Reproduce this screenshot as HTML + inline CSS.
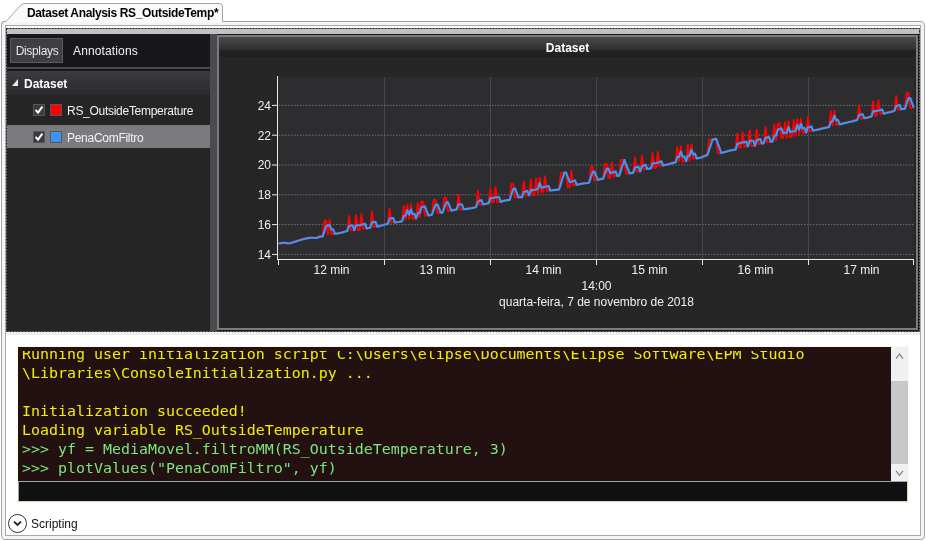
<!DOCTYPE html>
<html><head><meta charset="utf-8"><title>Dataset Analysis</title>
<style>
html,body{margin:0;padding:0;background:#fff;}
body{width:926px;height:541px;position:relative;overflow:hidden;font-family:"Liberation Sans",sans-serif;font-size:12px;color:#000;}
.abs{position:absolute;}
#outer{left:1px;top:21px;width:922px;height:517px;border:1px solid #a5a5a5;border-radius:4px;background:#f4f4f4;}
#inner{left:5px;top:25px;width:914px;height:509px;border:1px solid #a8a8a8;background:#fff;}
#tabsvg{left:0;top:0;}
#tabtxt{left:27px;top:6px;font-weight:bold;font-size:12px;letter-spacing:-0.36px;white-space:nowrap;}
#band{left:6px;top:29px;width:914px;height:5px;background:#c2c2c2;}
#dark{left:7px;top:34px;width:912px;height:297px;background:#18181c;}
#focus{left:0;top:0;}
#below{left:6px;top:332px;width:914px;height:3px;background:#efefef;}
#lp{left:7px;top:34px;width:203px;height:297px;background:#252526;}
#tabs{left:0;top:0;width:203px;height:37px;background:#18181c;}
#tabline{left:0;top:33px;width:203px;height:2px;background:#4b4b50;}
#btn{left:3px;top:4px;width:51px;height:23px;border:1px solid #5a5a5f;background:#3e3e43;color:#e6e6e6;line-height:24px;text-align:center;letter-spacing:-0.33px;text-indent:1px;}
#ann{left:66px;top:5px;color:#f0f0f0;line-height:24px;letter-spacing:0.13px;}
#dshead{left:0;top:37px;width:203px;height:24px;background:linear-gradient(#3b3b40,#2a2a2d);}
#dshead span{position:absolute;left:17px;top:6px;color:#fff;font-weight:bold;}
.row{left:0;width:203px;height:23px;color:#f2f2f2;}
.row .cb{position:absolute;left:26px;top:6px;width:10px;height:10px;border:1px solid #54545a;background:#3a3a40;}
.row .sw{position:absolute;left:43px;top:6px;width:10px;height:10px;border:1px solid #56565b;}
.row .t{position:absolute;left:60px;top:6px;white-space:nowrap;letter-spacing:-0.28px;}
#split{left:210px;top:34px;width:7px;height:297px;background:#4b4b4f;}
#chart{left:217px;top:35px;width:697px;height:291px;border:2px solid #7b7b80;background:#262626;}
#chead{left:0;top:0;width:697px;height:20px;background:linear-gradient(#4b4b4b 0%,#2f2f2f 63%,#242424 67%,#202020 100%);color:#fff;font-weight:bold;text-align:center;line-height:22px;}
#console{left:18px;top:347px;width:873px;height:134px;background:#231111;overflow:hidden;font-family:"DejaVu Sans Mono","Liberation Mono",monospace;font-size:14.95px;line-height:19px;white-space:pre;}
#console div{position:absolute;left:4px;}
.y{color:#f0f000;}
.g{color:#7fe47f;}
#sb{left:891px;top:347px;width:17px;height:134px;background:#f0f0f0;}
#thumb{left:0;top:34px;width:17px;height:83px;background:#c8c8c8;}
#inp{left:18px;top:481px;width:888px;height:19px;background:#111;border:1px solid #a4a4ac;border-bottom-color:#d8d8d0;border-right-color:#d8d8d0;}
#scr{left:31px;top:517px;font-size:12px;color:#111;}
#wrap{position:absolute;left:0;top:0;width:926px;height:541px;will-change:transform;}
</style></head><body><div id="wrap">
<div class="abs" id="outer"></div>
<div class="abs" id="inner"></div>
<svg class="abs" id="tabsvg" width="240" height="30" viewBox="0 0 240 30">
<path d="M2 26 L2 24 Q2 22 4 22 L6 21.5 L21 5 Q23 3.5 25 3.5 L219 3.5 Q222.5 3.5 222.5 7 L222.5 22.2 L2 22.2 Z" fill="#fafafa" stroke="none"/>
<path d="M1.5 26 L1.5 24 Q1.5 21.5 4 21.5 L6 21.5 L21 5 Q23 3.5 25 3.5 L219 3.5 Q222.5 3.5 222.5 7 L222.5 21.5" fill="none" stroke="#a5a5a5" stroke-width="1"/>
</svg>
<div class="abs" id="tabtxt">Dataset Analysis RS_OutsideTemp*</div>
<div class="abs" id="band"></div>
<div class="abs" id="dark"></div>
<div class="abs" id="below"></div>
<div class="abs" id="lp">
  <div class="abs" id="tabs"></div>
  <div class="abs" id="btn">Displays</div>
  <div class="abs" id="ann">Annotations</div>
  <div class="abs" id="tabline"></div>
  <div class="abs" id="dshead"><svg class="abs" style="left:5px;top:8px" width="8" height="8"><path d="M0 7 L6 7 L6 0 Z" fill="#eee"/></svg><span>Dataset</span></div>
  <div class="abs row" style="top:64px"><div class="cb"><svg width="10" height="10" style="position:absolute;left:0;top:0"><path d="M1.6 4.8 L4 7.6 L8.4 1.6" fill="none" stroke="#fff" stroke-width="2"/></svg></div><div class="sw" style="background:#f00"></div><div class="t">RS_OutsideTemperature</div></div>
  <div class="abs row" style="top:91px;background:#7b7b7f"><div class="cb"><svg width="10" height="10" style="position:absolute;left:0;top:0"><path d="M1.6 4.8 L4 7.6 L8.4 1.6" fill="none" stroke="#fff" stroke-width="2"/></svg></div><div class="sw" style="background:#3d93f5"></div><div class="t">PenaComFiltro</div></div>
</div>
<div class="abs" id="split"></div>
<div class="abs" id="chart">
  <div class="abs" id="chead">Dataset</div>
  <svg class="abs" id="plot" style="left:-219px;top:-37px" width="926" height="340" viewBox="0 0 926 340">
  <!--PLOT-->
<rect x="278" y="77" width="636" height="182" fill="#2d2d30"/>
<line x1="384.5" y1="77" x2="384.5" y2="259" stroke="#47474a" stroke-width="1"/>
<line x1="490.5" y1="77" x2="490.5" y2="259" stroke="#47474a" stroke-width="1"/>
<line x1="596.5" y1="77" x2="596.5" y2="259" stroke="#47474a" stroke-width="1"/>
<line x1="702.5" y1="77" x2="702.5" y2="259" stroke="#47474a" stroke-width="1"/>
<line x1="808.5" y1="77" x2="808.5" y2="259" stroke="#47474a" stroke-width="1"/>
<line x1="279" y1="105.4" x2="914" y2="105.4" stroke="#727274" stroke-width="1" stroke-dasharray="1.5 1.5"/>
<line x1="279" y1="135.2" x2="914" y2="135.2" stroke="#727274" stroke-width="1" stroke-dasharray="1.5 1.5"/>
<line x1="279" y1="165.0" x2="914" y2="165.0" stroke="#727274" stroke-width="1" stroke-dasharray="1.5 1.5"/>
<line x1="279" y1="194.8" x2="914" y2="194.8" stroke="#727274" stroke-width="1" stroke-dasharray="1.5 1.5"/>
<line x1="279" y1="224.6" x2="914" y2="224.6" stroke="#727274" stroke-width="1" stroke-dasharray="1.5 1.5"/>
<line x1="279" y1="254.4" x2="914" y2="254.4" stroke="#727274" stroke-width="1" stroke-dasharray="1.5 1.5"/>
<polyline fill="none" stroke="#ff0000" stroke-width="1.9" stroke-linejoin="round" points="278.5,243.5 280.3,243.1 282.0,242.7 283.8,242.7 285.6,243.1 287.3,243.5 289.1,243.2 290.9,242.6 292.6,242.0 294.4,241.4 296.1,240.8 297.9,240.3 299.7,239.7 301.4,239.2 303.2,238.8 305.0,238.4 306.7,238.1 308.5,237.8 310.3,237.5 312.0,237.8 313.8,238.1 315.6,238.0 317.3,237.0 319.1,236.0 320.9,236.5 322.6,237.0 324.4,220.5 326.1,220.6 327.9,234.5 329.7,220.0 331.4,234.1 333.2,233.8 335.0,233.6 336.7,233.4 338.5,233.0 340.3,232.6 342.0,232.2 343.8,231.6 345.6,231.1 347.3,230.5 349.1,215.9 350.9,230.1 352.6,230.1 354.4,230.4 356.1,215.2 357.9,230.4 359.7,229.9 361.4,213.9 363.2,228.8 365.0,228.4 366.7,228.0 368.5,227.7 370.3,227.4 372.0,211.7 373.8,227.1 375.6,226.8 377.3,226.3 379.1,225.8 380.9,225.3 382.6,224.8 384.4,224.3 386.1,223.8 387.9,223.4 389.7,208.7 391.4,222.7 393.2,222.4 395.0,222.2 396.7,222.0 398.5,221.7 400.3,221.3 402.0,220.9 403.8,206.0 405.6,219.5 407.3,205.2 409.1,219.0 410.9,204.3 412.6,218.6 414.4,218.5 416.1,218.4 417.9,203.0 419.7,217.1 421.4,201.7 423.2,201.7 425.0,215.8 426.7,215.5 428.5,215.1 430.3,214.7 432.0,214.4 433.8,199.8 435.6,199.8 437.3,213.0 439.1,212.7 440.9,212.6 442.6,212.3 444.4,197.6 446.1,197.6 447.9,211.0 449.7,210.6 451.4,210.2 453.2,209.8 455.0,209.4 456.7,209.0 458.5,194.6 460.3,209.4 462.0,209.4 463.8,209.1 465.6,208.9 467.3,208.6 469.1,208.3 470.9,207.9 472.6,207.6 474.4,207.2 476.1,206.8 477.9,190.7 479.7,204.9 481.4,204.4 483.2,204.0 485.0,203.7 486.7,203.3 488.5,203.0 490.3,188.5 492.0,202.4 493.8,202.0 495.6,187.2 497.3,202.3 499.1,202.0 500.9,201.3 502.6,200.6 504.4,200.3 506.1,200.1 507.9,199.9 509.7,199.7 511.4,183.7 513.2,183.7 515.0,197.5 516.7,197.1 518.5,197.3 520.3,197.5 522.0,197.3 523.8,181.5 525.6,195.6 527.3,195.2 529.1,195.0 530.9,179.8 532.6,195.4 534.4,194.4 536.1,178.5 537.9,193.3 539.7,177.6 541.4,192.2 543.2,191.9 545.0,176.3 546.7,190.9 548.5,190.5 550.3,190.3 552.0,190.1 553.8,189.9 555.6,189.7 557.3,189.5 559.1,189.3 560.9,173.0 562.6,172.8 564.4,172.5 566.1,172.3 567.9,187.4 569.7,187.0 571.4,171.0 573.2,185.3 575.0,184.8 576.7,184.4 578.5,184.0 580.3,183.7 582.0,183.4 583.8,183.2 585.6,183.0 587.3,182.8 589.1,182.4 590.9,167.0 592.6,167.0 594.4,180.4 596.1,179.8 597.9,179.4 599.7,179.0 601.4,178.5 603.2,178.2 605.0,163.9 606.7,163.9 608.5,177.9 610.3,177.8 612.0,162.6 613.8,176.0 615.6,175.7 617.3,175.9 619.1,175.8 620.9,160.0 622.6,160.0 624.4,160.0 626.2,173.8 627.9,173.4 629.7,173.1 631.4,172.8 633.2,172.5 635.0,157.4 636.7,171.5 638.5,171.5 640.3,171.4 642.0,155.6 643.8,169.5 645.6,168.9 647.3,168.7 649.1,168.4 650.9,168.2 652.6,153.3 654.4,168.4 656.2,167.6 657.9,151.9 659.7,166.1 661.4,165.6 663.2,165.1 665.0,164.7 666.7,164.3 668.5,163.9 670.3,163.3 672.0,162.8 673.8,162.3 675.6,161.9 677.3,147.2 679.1,161.5 680.9,146.3 682.6,161.9 684.4,161.2 686.2,160.6 687.9,145.0 689.7,160.6 691.4,144.1 693.2,158.7 695.0,158.1 696.7,158.3 698.5,157.9 700.3,157.2 702.0,156.5 703.8,155.8 705.6,155.0 707.3,154.5 709.1,139.8 710.9,139.5 712.6,139.2 714.4,138.8 716.2,138.5 717.9,153.4 719.7,153.1 721.4,152.6 723.2,152.1 725.0,151.6 726.7,151.1 728.5,150.6 730.3,150.2 732.0,149.9 733.8,149.7 735.6,149.2 737.3,133.5 739.1,147.5 740.9,147.4 742.6,132.2 744.4,146.7 746.2,146.3 747.9,146.0 749.7,130.4 751.4,146.0 753.2,145.8 755.0,145.4 756.7,129.5 758.5,144.2 760.3,143.7 762.0,143.3 763.8,142.9 765.6,126.9 767.3,142.3 769.1,142.0 770.9,141.4 772.6,140.8 774.4,124.8 776.2,140.1 777.9,123.5 779.7,123.5 781.4,137.8 783.2,138.0 785.0,122.2 786.7,137.8 788.5,121.3 790.3,137.1 792.0,136.5 793.8,120.0 795.6,135.7 797.3,119.1 799.1,133.9 800.9,118.6 802.6,132.7 804.4,132.5 806.2,132.4 807.9,117.2 809.7,131.2 811.4,130.7 813.2,130.3 815.0,129.9 816.7,129.5 818.5,129.1 820.3,128.6 822.0,128.2 823.8,127.8 825.6,127.4 827.3,127.0 829.1,126.6 830.9,111.5 832.6,125.4 834.4,110.6 836.2,124.7 837.9,124.4 839.7,124.0 841.4,123.5 843.2,123.1 845.0,122.7 846.7,122.3 848.5,121.8 850.3,121.4 852.0,120.9 853.8,120.5 855.6,120.0 857.3,119.6 859.1,105.1 860.9,118.8 862.6,118.3 864.4,117.9 866.2,117.5 867.9,117.0 869.7,116.6 871.4,116.2 873.2,101.4 875.0,115.8 876.7,115.4 878.5,100.3 880.3,114.2 882.0,113.7 883.8,113.2 885.6,112.8 887.3,112.3 889.1,111.9 890.9,111.4 892.6,111.0 894.4,110.6 896.2,96.0 897.9,109.7 899.7,109.3 901.4,108.9 903.2,108.6 905.0,108.2 906.7,93.0 908.5,93.0 910.3,108.2 912.0,107.7 913.8,107.0"/>
<polyline fill="none" stroke="#3c98f8" stroke-width="2.1" stroke-linejoin="round" points="278.5,243.5 280.3,243.3 282.0,243.1 283.8,242.8 285.6,242.8 287.3,243.1 289.1,243.2 290.9,243.1 292.6,242.6 294.4,242.0 296.1,241.4 297.9,240.8 299.7,240.3 301.4,239.7 303.2,239.3 305.0,238.8 306.7,238.4 308.5,238.1 310.3,237.8 312.0,237.7 313.8,237.8 315.6,238.0 317.3,237.7 319.1,237.0 320.9,236.5 322.6,236.5 324.4,231.3 326.1,226.0 327.9,225.2 329.7,225.0 331.4,229.5 333.2,229.3 335.0,233.8 336.7,233.6 338.5,233.3 340.3,233.0 342.0,232.6 343.8,232.1 345.6,231.6 347.3,231.1 349.1,225.8 350.9,225.5 352.6,225.4 354.4,230.2 356.1,225.2 357.9,225.3 359.7,225.2 361.4,224.7 363.2,224.2 365.0,223.7 366.7,228.4 368.5,228.0 370.3,227.7 372.0,222.3 373.8,222.1 375.6,221.9 377.3,226.7 379.1,226.3 380.9,225.8 382.6,225.3 384.4,224.8 386.1,224.3 387.9,223.9 389.7,218.6 391.4,218.3 393.2,218.0 395.0,222.5 396.7,222.2 398.5,222.0 400.3,221.7 402.0,221.3 403.8,216.1 405.6,215.5 407.3,210.2 409.1,214.6 410.9,209.5 412.6,214.0 414.4,213.8 416.1,218.5 417.9,213.3 419.7,212.9 421.4,207.3 423.2,206.8 425.0,206.4 426.7,211.0 428.5,215.5 430.3,215.1 432.0,214.7 433.8,209.6 435.6,204.7 437.3,204.2 439.1,208.5 440.9,212.8 442.6,212.6 444.4,207.5 446.1,202.5 447.9,202.1 449.7,206.4 451.4,210.6 453.2,210.2 455.0,209.8 456.7,209.4 458.5,204.3 460.3,204.3 462.0,204.5 463.8,209.3 465.6,209.1 467.3,208.9 469.1,208.6 470.9,208.3 472.6,207.9 474.4,207.6 476.1,207.2 477.9,201.6 479.7,200.8 481.4,200.0 483.2,204.4 485.0,204.0 486.7,203.7 488.5,203.3 490.3,198.3 492.0,198.0 493.8,197.7 495.6,197.2 497.3,197.2 499.1,197.2 500.9,201.9 502.6,201.3 504.4,200.8 506.1,200.4 507.9,200.1 509.7,199.9 511.4,194.5 513.2,189.0 515.0,188.3 516.7,192.7 518.5,197.3 520.3,197.3 522.0,197.3 523.8,192.1 525.6,191.5 527.3,190.8 529.1,195.3 530.9,190.0 532.6,190.1 534.4,189.8 536.1,189.4 537.9,188.7 539.7,183.1 541.4,187.7 543.2,187.2 545.0,186.8 546.7,186.4 548.5,185.9 550.3,190.6 552.0,190.3 553.8,190.1 555.6,189.9 557.3,189.7 559.1,189.5 560.9,183.9 562.6,178.3 564.4,172.8 566.1,172.5 567.9,177.4 569.7,182.2 571.4,181.8 573.2,181.1 575.0,180.3 576.7,184.8 578.5,184.4 580.3,184.0 582.0,183.7 583.8,183.4 585.6,183.2 587.3,183.0 589.1,182.7 590.9,177.4 592.6,172.1 594.4,171.5 596.1,175.7 597.9,179.9 599.7,179.4 601.4,179.0 603.2,178.6 605.0,173.5 606.7,168.7 608.5,168.6 610.3,173.2 612.0,172.8 613.8,172.1 615.6,171.4 617.3,175.9 619.1,175.8 620.9,170.6 622.6,165.3 624.4,160.0 626.2,164.6 627.9,169.0 629.7,173.4 631.4,173.1 633.2,172.8 635.0,167.6 636.7,167.1 638.5,166.8 640.3,171.5 642.0,166.2 643.8,165.5 645.6,164.7 647.3,169.0 649.1,168.7 650.9,168.4 652.6,163.3 654.4,163.3 656.2,163.1 657.9,162.6 659.7,161.9 661.4,161.2 663.2,165.6 665.0,165.1 666.7,164.7 668.5,164.3 670.3,163.8 672.0,163.3 673.8,162.8 675.6,162.3 677.3,157.1 679.1,156.9 680.9,151.7 682.6,156.6 684.4,156.5 686.2,161.2 687.9,155.6 689.7,155.4 691.4,149.9 693.2,154.5 695.0,153.6 696.7,158.4 698.5,158.1 700.3,157.8 702.0,157.2 703.8,156.5 705.6,155.8 707.3,155.1 709.1,149.8 710.9,144.6 712.6,139.5 714.4,139.2 716.2,138.8 717.9,143.6 719.7,148.3 721.4,153.1 723.2,152.6 725.0,152.1 726.7,151.6 728.5,151.1 730.3,150.6 732.0,150.2 733.8,149.9 735.6,149.6 737.3,144.1 739.1,143.4 740.9,142.8 742.6,142.4 744.4,142.1 746.2,141.7 747.9,146.3 749.7,140.9 751.4,140.8 753.2,140.7 755.0,145.8 756.7,140.3 758.5,139.7 760.3,139.1 762.0,143.7 763.8,143.3 765.6,137.7 767.3,137.4 769.1,137.1 770.9,141.9 772.6,141.4 774.4,135.6 776.2,135.2 777.9,129.5 779.7,129.0 781.4,128.3 783.2,133.1 785.0,132.7 786.7,132.7 788.5,127.1 790.3,132.1 792.0,131.6 793.8,131.2 795.6,130.7 797.3,124.9 799.1,129.6 800.9,123.9 802.6,128.4 804.4,127.9 806.2,132.5 807.9,127.3 809.7,126.9 811.4,126.4 813.2,130.8 815.0,130.3 816.7,129.9 818.5,129.5 820.3,129.1 822.0,128.6 823.8,128.2 825.6,127.8 827.3,127.4 829.1,127.0 830.9,121.7 832.6,121.2 834.4,115.8 836.2,120.2 837.9,119.9 839.7,124.4 841.4,124.0 843.2,123.5 845.0,123.1 846.7,122.7 848.5,122.3 850.3,121.8 852.0,121.4 853.8,120.9 855.6,120.5 857.3,120.0 859.1,114.9 860.9,114.5 862.6,114.1 864.4,118.3 866.2,117.9 867.9,117.5 869.7,117.0 871.4,116.6 873.2,111.4 875.0,111.1 876.7,110.9 878.5,110.5 880.3,110.0 882.0,109.4 883.8,113.7 885.6,113.2 887.3,112.8 889.1,112.3 890.9,111.9 892.6,111.4 894.4,111.0 896.2,105.9 897.9,105.4 899.7,105.0 901.4,109.3 903.2,108.9 905.0,108.6 906.7,103.3 908.5,98.1 910.3,98.1 912.0,103.0 913.8,107.6"/>
<line x1="277.5" y1="76" x2="277.5" y2="260" stroke="#e8e8e8" stroke-width="1"/>
<line x1="278" y1="259.5" x2="914" y2="259.5" stroke="#e8e8e8" stroke-width="1"/>
<line x1="272" y1="105.4" x2="277" y2="105.4" stroke="#e8e8e8" stroke-width="1"/>
<line x1="272" y1="135.2" x2="277" y2="135.2" stroke="#e8e8e8" stroke-width="1"/>
<line x1="272" y1="165.0" x2="277" y2="165.0" stroke="#e8e8e8" stroke-width="1"/>
<line x1="272" y1="194.8" x2="277" y2="194.8" stroke="#e8e8e8" stroke-width="1"/>
<line x1="272" y1="224.6" x2="277" y2="224.6" stroke="#e8e8e8" stroke-width="1"/>
<line x1="272" y1="254.4" x2="277" y2="254.4" stroke="#e8e8e8" stroke-width="1"/>
<line x1="278.5" y1="260" x2="278.5" y2="265" stroke="#e8e8e8" stroke-width="1"/>
<line x1="384.5" y1="260" x2="384.5" y2="265" stroke="#e8e8e8" stroke-width="1"/>
<line x1="490.5" y1="260" x2="490.5" y2="265" stroke="#e8e8e8" stroke-width="1"/>
<line x1="596.5" y1="260" x2="596.5" y2="265" stroke="#e8e8e8" stroke-width="1"/>
<line x1="702.5" y1="260" x2="702.5" y2="265" stroke="#e8e8e8" stroke-width="1"/>
<line x1="808.5" y1="260" x2="808.5" y2="265" stroke="#e8e8e8" stroke-width="1"/>
<line x1="913.5" y1="260" x2="913.5" y2="265" stroke="#e8e8e8" stroke-width="1"/>
<g fill="#f0f0f0" font-family="Liberation Sans, sans-serif" font-size="12">
<text x="271" y="109.7" text-anchor="end">24</text>
<text x="271" y="139.5" text-anchor="end">22</text>
<text x="271" y="169.3" text-anchor="end">20</text>
<text x="271" y="199.1" text-anchor="end">18</text>
<text x="271" y="228.9" text-anchor="end">16</text>
<text x="271" y="258.7" text-anchor="end">14</text>
<text x="331.5" y="274" text-anchor="middle">12 min</text>
<text x="437.5" y="274" text-anchor="middle">13 min</text>
<text x="543.5" y="274" text-anchor="middle">14 min</text>
<text x="649.5" y="274" text-anchor="middle">15 min</text>
<text x="755.5" y="274" text-anchor="middle">16 min</text>
<text x="861.5" y="274" text-anchor="middle">17 min</text>
<text x="596.5" y="290" text-anchor="middle">14:00</text>
<text x="596.5" y="306" text-anchor="middle">quarta-feira, 7 de novembro de 2018</text>
</g>
<!--/PLOT-->
  </svg>
</div>
<svg class="abs" id="focus" width="926" height="340"><rect x="6.5" y="28.5" width="913" height="303" fill="none" stroke="#b4b4b4" stroke-width="1"/><rect x="6.5" y="28.5" width="913" height="303" fill="none" stroke="#1c1c1c" stroke-width="1" stroke-dasharray="2 1"/></svg>
<div class="abs" style="left:17px;top:346px;width:890px;height:155px;border:1px solid #fafae6"></div>
<div class="abs" id="console">
<div class="y" style="top:-2.5px">Running user initialization script C:\Users\elipse\Documents\Elipse Software\EPM Studio</div>
<div class="y" style="top:16.5px">\Libraries\ConsoleInitialization.py ...</div>
<div class="y" style="top:54.5px">Initialization succeeded!</div>
<div class="y" style="top:73.5px">Loading variable RS_OutsideTemperature</div>
<div class="g" style="top:92.5px">&gt;&gt;&gt; yf = MediaMovel.filtroMM(RS_OutsideTemperature, 3)</div>
<div class="g" style="top:111.5px">&gt;&gt;&gt; plotValues("PenaComFiltro", yf)</div>
<div style="left:0;top:0;width:873px;height:4px;background:#231111"></div>
</div>
<div class="abs" id="sb"><div class="abs" id="thumb"></div>
<svg class="abs" style="left:0;top:0" width="17" height="134"><path d="M5 11.6 L8.5 7 L12 11.6" fill="none" stroke="#858585" stroke-width="1.3"/><path d="M5 123.8 L8.5 128.3 L12 123.8" fill="none" stroke="#858585" stroke-width="1.3"/></svg>
</div>
<div class="abs" id="inp"></div>
<svg class="abs" style="left:7px;top:513px" width="22" height="22"><circle cx="10.5" cy="10.5" r="9" fill="#fff" stroke="#333" stroke-width="1"/><path d="M7 8.6 L10.5 12 L14 8.6" fill="none" stroke="#222" stroke-width="1.9"/></svg>
<div class="abs" id="scr">Scripting</div>
</div></body></html>
